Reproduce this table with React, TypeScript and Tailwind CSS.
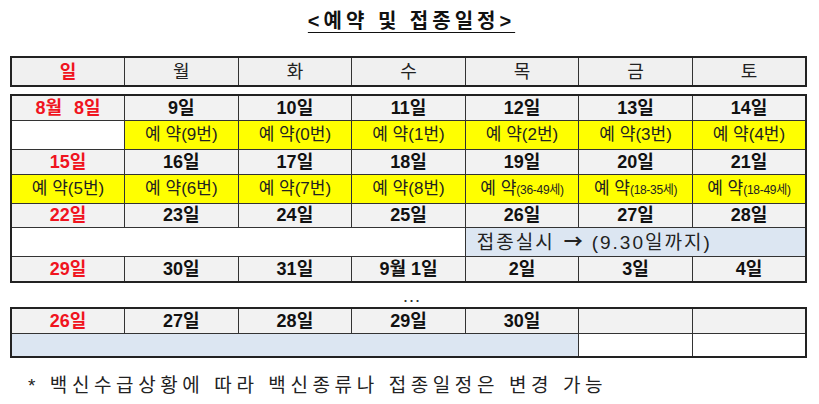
import React from "react";

const F = { fontFamily: '"Liberation Sans", "Noto Sans CJK KR", sans-serif' };

const RED = "text-[#f0141e]";

function DateCell({ children, red }: { children?: React.ReactNode; red?: boolean }) {
  return (
    <td
      className={`border border-[#333] bg-[#f2f2f2] text-center align-middle p-0 text-[18px] leading-none font-bold ${
        red ? RED : "text-[#111]"
      }`}
    >
      {children}
    </td>
  );
}

function YCell({ n, age }: { n?: string; age?: string }) {
  return (
    <td className="border border-[#333] bg-[#ffff00] text-center align-middle p-0 text-[17px] leading-none text-[#222]">
      <span>예 약</span>
      {n !== undefined && <span>({n}번)</span>}
      {age !== undefined && <span className="text-[12px] tracking-[-0.3px]">({age}세)</span>}
    </td>
  );
}

export default function App() {
  const days = ["일", "월", "화", "수", "목", "금", "토"];
  return (
    <div className="w-[819px] h-[404px] bg-white overflow-hidden" style={F}>
      <div className="flex justify-center pt-[9px] h-[56px]">
        <div className="text-[20px] font-bold leading-[24px] tracking-[4px] underline underline-offset-[4px] decoration-1 text-[#111] ml-[4px]">
          &lt;예약 및 접종일정&gt;
        </div>
      </div>

      <div className="ml-[10px] w-[797px]">
        <table className="w-full table-fixed border-collapse border-2 border-[#222]">
          <tbody>
            <tr className="h-[29px]">
              {days.map((d, i) => (
                <td
                  key={d}
                  className={`border border-[#333] bg-[#f0f0f0] text-center align-middle p-0 text-[18px] leading-none ${
                    i === 0 ? RED + " font-bold" : "text-[#222]"
                  }`}
                >
                  {d}
                </td>
              ))}
            </tr>
          </tbody>
        </table>

        <table className="mt-[7px] w-full table-fixed border-collapse border-2 border-[#222]">
          <tbody>
            <tr className="h-[25px]">
              <DateCell red>
                8월<span className="ml-[12px]">8일</span>
              </DateCell>
              <DateCell>9일</DateCell>
              <DateCell>10일</DateCell>
              <DateCell>11일</DateCell>
              <DateCell>12일</DateCell>
              <DateCell>13일</DateCell>
              <DateCell>14일</DateCell>
            </tr>
            <tr className="h-[29px]">
              <td className="border border-[#333] bg-white p-0"></td>
              <YCell n="9" />
              <YCell n="0" />
              <YCell n="1" />
              <YCell n="2" />
              <YCell n="3" />
              <YCell n="4" />
            </tr>
            <tr className="h-[25px]">
              <DateCell red>15일</DateCell>
              <DateCell>16일</DateCell>
              <DateCell>17일</DateCell>
              <DateCell>18일</DateCell>
              <DateCell>19일</DateCell>
              <DateCell>20일</DateCell>
              <DateCell>21일</DateCell>
            </tr>
            <tr className="h-[29px]">
              <YCell n="5" />
              <YCell n="6" />
              <YCell n="7" />
              <YCell n="8" />
              <YCell age="36-49" />
              <YCell age="18-35" />
              <YCell age="18-49" />
            </tr>
            <tr className="h-[24px]">
              <DateCell red>22일</DateCell>
              <DateCell>23일</DateCell>
              <DateCell>24일</DateCell>
              <DateCell>25일</DateCell>
              <DateCell>26일</DateCell>
              <DateCell>27일</DateCell>
              <DateCell>28일</DateCell>
            </tr>
            <tr className="h-[29px]">
              <td colSpan={4} className="border border-[#333] bg-white p-0"></td>
              <td
                colSpan={3}
                className="border border-[#333] bg-[#dce6f2] p-0 pl-[11px] text-left align-middle text-[19px] leading-none text-[#222] tracking-[2px]"
              >
                접종실시<span className="mx-[9px] font-['Noto_Sans_CJK_KR',sans-serif] font-bold tracking-normal">→</span>(9.30일까지)
              </td>
            </tr>
            <tr className="h-[26px]">
              <DateCell red>29일</DateCell>
              <DateCell>30일</DateCell>
              <DateCell>31일</DateCell>
              <DateCell>9월 1일</DateCell>
              <DateCell>2일</DateCell>
              <DateCell>3일</DateCell>
              <DateCell>4일</DateCell>
            </tr>
          </tbody>
        </table>

        <div className="h-[24px] flex items-center justify-center text-[19px] leading-none text-[#333] pl-[6px]">
          …
        </div>

        <table className="w-full table-fixed border-collapse border-2 border-[#222]">
          <tbody>
            <tr className="h-[25px]">
              <DateCell red>26일</DateCell>
              <DateCell>27일</DateCell>
              <DateCell>28일</DateCell>
              <DateCell>29일</DateCell>
              <DateCell>30일</DateCell>
              <DateCell></DateCell>
              <DateCell></DateCell>
            </tr>
            <tr className="h-[24px]">
              <td colSpan={5} className="border border-[#333] bg-[#dce6f2] p-0"></td>
              <td className="border border-[#333] bg-white p-0"></td>
              <td className="border border-[#333] bg-white p-0"></td>
            </tr>
          </tbody>
        </table>
      </div>

      <div className="ml-[28px] mt-[16px] text-[19px] leading-[24px] tracking-[4.6px] text-[#222]">
        * 백신수급상황에 따라 백신종류나 접종일정은 변경 가능
      </div>
    </div>
  );
}
